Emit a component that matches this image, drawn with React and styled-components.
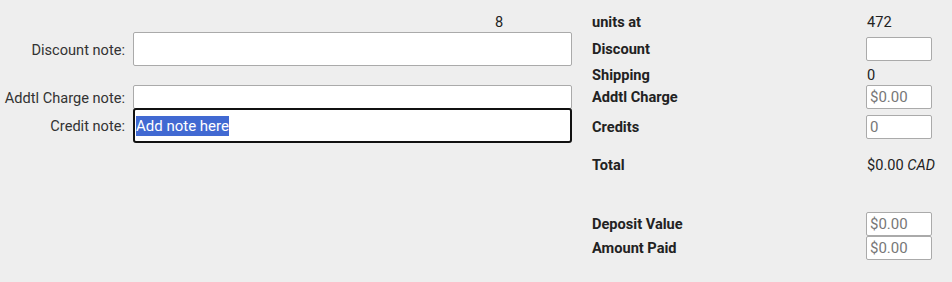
import React from 'react';
import styled, { createGlobalStyle } from 'styled-components';

const GlobalStyle = createGlobalStyle`
  html, body {
    margin: 0;
    padding: 0;
    background: #eeeeee;
    font-family: Roboto, "Liberation Sans", sans-serif;
    font-size: 14.6px;
    color: #222;
  }
`;

const Page = styled.div`
  display: flex;
  width: 952px;
  height: 282px;
  box-sizing: border-box;
`;

const NotesPanel = styled.div`
  width: 572px;
  display: flex;
  flex-direction: column;
`;

const Count = styled.div`
  height: 20px;
  line-height: 20px;
  margin-top: 12px;
  padding-left: 495px;
  color: #222;
`;

const NoteRow = styled.div`
  display: grid;
  grid-template-columns: 125px 1fr;
  column-gap: 8px;
  align-items: center;
  margin-top: ${({ $mt }) => $mt || 0}px;
`;

const NoteLabel = styled.label`
  text-align: right;
  color: #333;
  white-space: nowrap;
  padding-top: 1px;
`;

const NoteInput = styled.input`
  box-sizing: border-box;
  width: 100%;
  height: ${({ $h }) => $h}px;
  border: 1px solid #aaa;
  border-radius: 2px;
  background: #fff;
  font: inherit;
  padding: 0 4px;
  margin: 0;
`;

const FocusedNote = styled.div`
  box-sizing: border-box;
  height: 35px;
  border: 2px solid #111;
  border-radius: 3px;
  background: #fff;
  display: flex;
  align-items: center;
  padding: 0 1px;
  font-size: 15px;
`;

const Selected = styled.span`
  background: #4169d2;
  color: #fff;
  line-height: 20px;
`;

const SummaryPanel = styled.div`
  margin-left: 20px;
  width: 340px;
  display: flex;
  flex-direction: column;
`;

const SumRow = styled.div`
  display: grid;
  grid-template-columns: 274px 1fr;
  align-items: center;
  height: ${({ $h }) => $h || 20}px;
  margin-top: ${({ $mt }) => $mt || 0}px;
`;

const SumLabel = styled.div`
  font-weight: 700;
  color: #222;
`;

const SumValue = styled.div`
  color: #222;
  padding-left: 1px;
  white-space: nowrap;
`;

const Currency = styled.em`
  font-style: italic;
`;

const SmallInput = styled.input`
  box-sizing: border-box;
  width: 66px;
  height: 24px;
  border: 1px solid #aaa;
  border-radius: 2px;
  background: #fff;
  font: inherit;
  font-size: 15px;
  padding: 0 3px;
  margin: 0;
  color: #222;

  &::placeholder {
    color: #777;
  }
`;

export default function App() {
  return (
    <>
      <GlobalStyle />
      <Page>
        <NotesPanel>
          <Count>8</Count>
          <NoteRow>
            <NoteLabel>Discount note:</NoteLabel>
            <NoteInput $h={34} />
          </NoteRow>
          <NoteRow $mt={19}>
            <NoteLabel>Addtl Charge note:</NoteLabel>
            <NoteInput $h={24} />
          </NoteRow>
          <NoteRow $mt={-1}>
            <NoteLabel>Credit note:</NoteLabel>
            <FocusedNote>
              <Selected>Add note here</Selected>
            </FocusedNote>
          </NoteRow>
        </NotesPanel>

        <SummaryPanel>
          <SumRow $mt={12}>
            <SumLabel>units at</SumLabel>
            <SumValue>472</SumValue>
          </SumRow>
          <SumRow $mt={5} $h={24}>
            <SumLabel>Discount</SumLabel>
            <SmallInput />
          </SumRow>
          <SumRow $mt={4}>
            <SumLabel>Shipping</SumLabel>
            <SumValue>0</SumValue>
          </SumRow>
          <SumRow $h={24}>
            <SumLabel>Addtl Charge</SumLabel>
            <SmallInput placeholder="$0.00" />
          </SumRow>
          <SumRow $mt={6} $h={24}>
            <SumLabel>Credits</SumLabel>
            <SmallInput placeholder="0" />
          </SumRow>
          <SumRow $mt={16}>
            <SumLabel>Total</SumLabel>
            <SumValue>
              $0.00 <Currency>CAD</Currency>
            </SumValue>
          </SumRow>
          <SumRow $mt={37} $h={24}>
            <SumLabel>Deposit Value</SumLabel>
            <SmallInput placeholder="$0.00" />
          </SumRow>
          <SumRow $h={24}>
            <SumLabel>Amount Paid</SumLabel>
            <SmallInput placeholder="$0.00" />
          </SumRow>
        </SummaryPanel>
      </Page>
    </>
  );
}
